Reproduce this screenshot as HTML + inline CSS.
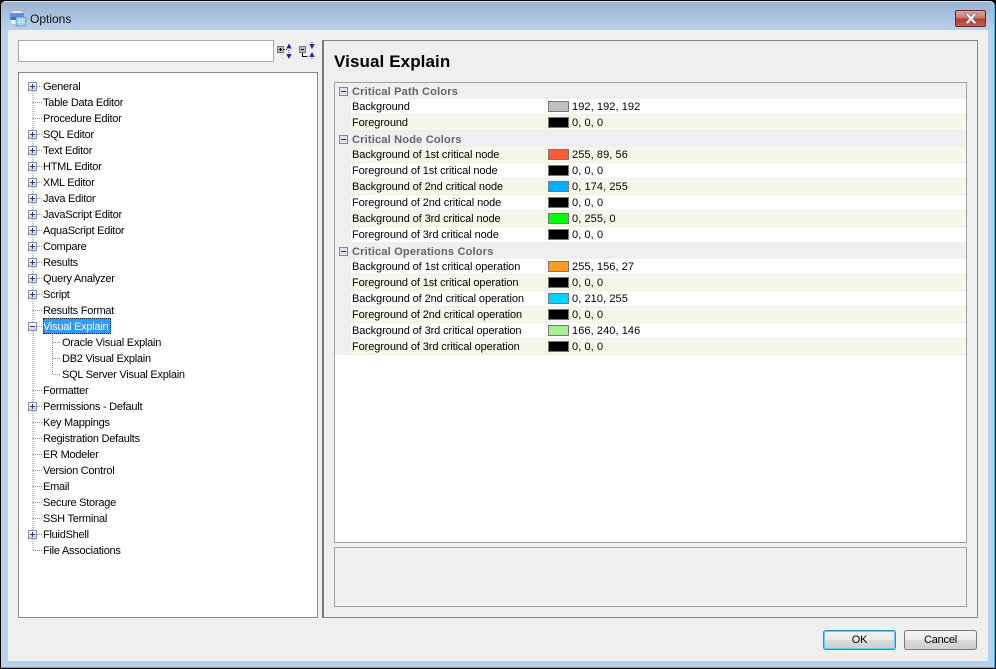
<!DOCTYPE html>
<html><head><meta charset="utf-8"><title>Options</title>
<style>
html,body{margin:0;padding:0;width:996px;height:669px;overflow:hidden;background:#000}
*{box-sizing:border-box}
body{position:relative;font:11px/16px "Liberation Sans",sans-serif;color:#000}
.a{position:absolute}
#frame{left:1px;top:1px;width:994px;height:666px;background:#b9d1ea;border-radius:5px 5px 0 0;box-shadow:inset -1px 0 #2bc5ec}
#grad{left:1px;top:1px;width:993px;height:29px;background:linear-gradient(#97b2d1,#b9d1ea);border-radius:5px 5px 0 0;box-shadow:inset 0 1px #d8e4f0}
#client{left:8px;top:30px;width:980px;height:631px;background:#efefef}
.box{background:#fff;border:1px solid #888}
.t{position:absolute;left:43px;white-space:nowrap;height:16px;letter-spacing:-.25px;line-height:18px}
.c{left:62px}
.x{position:absolute;left:28px;width:9px;height:9px;background:linear-gradient(#fff,#c9d2e4);border:1px solid #8a92a5}
.x:before{content:"";position:absolute;left:1px;top:3px;width:5px;height:1px;background:#2a3a9a}
.x.p:after{content:"";position:absolute;left:3px;top:1px;width:1px;height:5px;background:#2a3a9a}
.g{position:absolute;left:335px;width:631px;height:16px;background:#efefef;font-weight:bold;color:#666;letter-spacing:.2px;padding-left:17px;line-height:18px}
.r{position:absolute;left:351px;width:615px;height:16px;background:#fff;padding-left:1px;border-bottom:1px solid #eee;letter-spacing:-.1px}
.y{background:#f7f7e9}
.s{position:absolute;left:197px;top:2px;width:21px;height:11px;border:1px solid #777}
.v{position:absolute;left:221px;top:0;letter-spacing:.08px}
.d{position:absolute;left:194px;top:0;width:1px;height:16px;background:#eee}
.b{position:absolute;top:630px;width:73px;height:20px;border:1px solid #777;border-radius:3px;background:linear-gradient(#f4f4f4 0,#ececec 48%,#dadada 52%,#cfcfcf 100%);text-align:center;line-height:18px;letter-spacing:-.2px}
</style></head><body>
<div class="a" id="frame"></div><div class="a" id="grad"></div>
<div class="a" style="left:1px;top:667px;width:994px;height:1px;background:#2bc5ec"></div>
<svg class="a" style="left:9px;top:10px" width="18" height="17" viewBox="0 0 18 17">
<ellipse cx="8" cy="3" rx="7" ry="2.500" fill="#e4eef8" stroke="#7d9bc0" stroke-width=".6"/><rect x="1" y="3" width="14" height="6" fill="#5d93d0"/><ellipse cx="8" cy="9" rx="7" ry="2.500" fill="#3a75b8"/><path d="M1 10h6v4H3z" fill="#f2f2f2"/><rect x="7" y="7" width="10" height="9" fill="#8cc4ee" stroke="#5a93c8" stroke-width=".6"/><path d="M8 10h8M8 12.500h8M10.500 8v7M13.500 8v7" stroke="#e9f5fd" stroke-width=".7"/></svg>
<div class="a" style="left:30px;top:11px;font-size:12px;color:#111">Options</div>
<div class="a" style="left:955px;top:10px;width:31px;height:17px;border:1px solid #5e2b3a;border-radius:2px;background:linear-gradient(#dba79f 0,#c8786b 45%,#b03e2e 55%,#c9604e 100%)"></div>
<svg class="a" style="left:963px;top:12px" width="16" height="13" viewBox="0 0 16 13"><path d="M2 1.500h3.500L8 4.500l2.500-3H14L10 6.500l4 5h-3.500L8 8.500l-2.500 3H2L6 6.500z" fill="#f2f3f6" stroke="#6b7280" stroke-width=".6"/></svg>
<div class="a" id="client"></div>

<div class="a box" style="left:18px;top:40px;width:256px;height:22px;border-color:#aaa"></div>
<svg class="a" style="left:277px;top:42px" width="40" height="19" viewBox="0 0 40 19">
<rect x="0.500" y="4.500" width="6" height="6" fill="#bbb" stroke="#777"/><path d="M2 7.500h3M3.500 6v3" stroke="#000"/><path d="M7 7.500h3" stroke="#333" stroke-dasharray="1 1"/>
<path d="M12 1.500l2.700 5H9.300z M12 17l2.700-5H9.300z" fill="#1a2a9a"/><path d="M12 8v3" stroke="#1a2a9a" stroke-dasharray="1 1"/>
<rect x="22.500" y="4.500" width="6" height="6" fill="#bbb" stroke="#777"/><path d="M24 7.500h3" stroke="#000"/><path d="M25.500 11v3.500h5" fill="none" stroke="#000"/>
<path d="M35 7l2.700-5h-5.400z M35 10l2.700 5h-5.400z" fill="#1a2a9a"/><path d="M35 0v1M35 16v1" stroke="#1a2a9a"/></svg>

<div class="a box" style="left:18px;top:72px;width:300px;height:546px"></div>
<svg class="a" style="left:0;top:0" width="320" height="620">
<g stroke="#888" stroke-dasharray="1 1" fill="none">
<path d="M33 91V550M37 86.500h5M33 102.500h9M33 118.500h9M37 134.500h5M37 150.500h5M37 166.500h5M37 182.500h5M37 198.500h5M37 214.500h5M37 230.500h5M37 246.500h5M37 262.500h5M37 278.500h5M37 294.500h5M33 310.500h9M37 326.500h5M33 390.500h9M37 406.500h5M33 422.500h9M33 438.500h9M33 454.500h9M33 470.500h9M33 486.500h9M33 502.500h9M33 518.500h9M37 534.500h5M33 550.500h9"/>
<path d="M52.500 335V374M53 342.500h8M53 358.500h8M53 374.500h8"/>
</g></svg>
<div class="x p" style="top:82px"></div><div class="x p" style="top:130px"></div><div class="x p" style="top:146px"></div><div class="x p" style="top:162px"></div><div class="x p" style="top:178px"></div><div class="x p" style="top:194px"></div><div class="x p" style="top:210px"></div><div class="x p" style="top:226px"></div><div class="x p" style="top:242px"></div><div class="x p" style="top:258px"></div><div class="x p" style="top:274px"></div><div class="x p" style="top:290px"></div><div class="x" style="top:322px"></div><div class="x p" style="top:402px"></div><div class="x p" style="top:530px"></div>
<div class="t" style="top:78px">General</div>
<div class="t" style="top:94px">Table Data Editor</div>
<div class="t" style="top:110px">Procedure Editor</div>
<div class="t" style="top:126px">SQL Editor</div>
<div class="t" style="top:142px">Text Editor</div>
<div class="t" style="top:158px">HTML Editor</div>
<div class="t" style="top:174px">XML Editor</div>
<div class="t" style="top:190px">Java Editor</div>
<div class="t" style="top:206px">JavaScript Editor</div>
<div class="t" style="top:222px">AquaScript Editor</div>
<div class="t" style="top:238px">Compare</div>
<div class="t" style="top:254px">Results</div>
<div class="t" style="top:270px">Query Analyzer</div>
<div class="t" style="top:286px">Script</div>
<div class="t" style="top:302px">Results Format</div>
<div class="t" style="top:318px;left:43px;width:68px;background:#3399ff;color:#fff;outline:1px dotted #123;outline-offset:-1px">Visual Explain</div>
<div class="t c" style="top:334px">Oracle Visual Explain</div>
<div class="t c" style="top:350px">DB2 Visual Explain</div>
<div class="t c" style="top:366px">SQL Server Visual Explain</div>
<div class="t" style="top:382px">Formatter</div>
<div class="t" style="top:398px">Permissions - Default</div>
<div class="t" style="top:414px">Key Mappings</div>
<div class="t" style="top:430px">Registration Defaults</div>
<div class="t" style="top:446px">ER Modeler</div>
<div class="t" style="top:462px">Version Control</div>
<div class="t" style="top:478px">Email</div>
<div class="t" style="top:494px">Secure Storage</div>
<div class="t" style="top:510px">SSH Terminal</div>
<div class="t" style="top:526px">FluidShell</div>
<div class="t" style="top:542px">File Associations</div>

<div class="a" style="left:322px;top:40px;width:656px;height:578px;border:1px solid #888;border-left:2px solid #777"></div>
<div class="a" style="left:334px;top:52px;font-size:17px;line-height:20px;font-weight:bold;color:#000;letter-spacing:.1px">Visual Explain</div>

<div class="a" style="left:334px;top:82px;width:633px;height:461px;background:#fff;border:1px solid #a0a0a0"></div>
<div class="g" style="top:83px">Critical Path Colors</div>
<div class="r" style="top:99px">Background<span class="d"></span><span class="s" style="background:#c0c0c0"></span><span class="v">192, 192, 192</span></div>
<div class="r y" style="top:115px">Foreground<span class="d"></span><span class="s" style="background:#000"></span><span class="v">0, 0, 0</span></div>
<div class="g" style="top:131px">Critical Node Colors</div>
<div class="r y" style="top:147px">Background of 1st critical node<span class="d"></span><span class="s" style="background:#ff5938"></span><span class="v">255, 89, 56</span></div>
<div class="r" style="top:163px">Foreground of 1st critical node<span class="d"></span><span class="s" style="background:#000"></span><span class="v">0, 0, 0</span></div>
<div class="r y" style="top:179px">Background of 2nd critical node<span class="d"></span><span class="s" style="background:#00aeff"></span><span class="v">0, 174, 255</span></div>
<div class="r" style="top:195px">Foreground of 2nd critical node<span class="d"></span><span class="s" style="background:#000"></span><span class="v">0, 0, 0</span></div>
<div class="r y" style="top:211px">Background of 3rd critical node<span class="d"></span><span class="s" style="background:#00ff00"></span><span class="v">0, 255, 0</span></div>
<div class="r" style="top:227px">Foreground of 3rd critical node<span class="d"></span><span class="s" style="background:#000"></span><span class="v">0, 0, 0</span></div>
<div class="g" style="top:243px">Critical Operations Colors</div>
<div class="r" style="top:259px">Background of 1st critical operation<span class="d"></span><span class="s" style="background:#ff9c1b"></span><span class="v">255, 156, 27</span></div>
<div class="r y" style="top:275px">Foreground of 1st critical operation<span class="d"></span><span class="s" style="background:#000"></span><span class="v">0, 0, 0</span></div>
<div class="r" style="top:291px">Background of 2nd critical operation<span class="d"></span><span class="s" style="background:#00d2ff"></span><span class="v">0, 210, 255</span></div>
<div class="r y" style="top:307px">Foreground of 2nd critical operation<span class="d"></span><span class="s" style="background:#000"></span><span class="v">0, 0, 0</span></div>
<div class="r" style="top:323px">Background of 3rd critical operation<span class="d"></span><span class="s" style="background:#a6f092"></span><span class="v">166, 240, 146</span></div>
<div class="r y" style="top:339px">Foreground of 3rd critical operation<span class="d"></span><span class="s" style="background:#000"></span><span class="v">0, 0, 0</span></div>
<div class="a" style="left:335px;top:83px;width:16px;height:272px;background:#efefef"></div>
<svg class="a" style="left:339px;top:87px" width="10" height="170"><g fill="#dfe2ea" stroke="#7c869c"><rect x=".5" y=".5" width="8" height="8"/><rect x=".5" y="48.500" width="8" height="8"/><rect x=".5" y="160.500" width="8" height="8"/></g><path d="M2 4.500h5M2 52.500h5M2 164.500h5" stroke="#333"/></svg>

<div class="a" style="left:334px;top:547px;width:633px;height:60px;border:1px solid #a0a0a0;background:#efefef"></div>

<div class="b" style="left:823px;border:1px solid #2f8fb8;box-shadow:inset 0 0 0 1px #5fd0f5">OK</div>
<div class="b" style="left:904px">Cancel</div>
</body></html>
